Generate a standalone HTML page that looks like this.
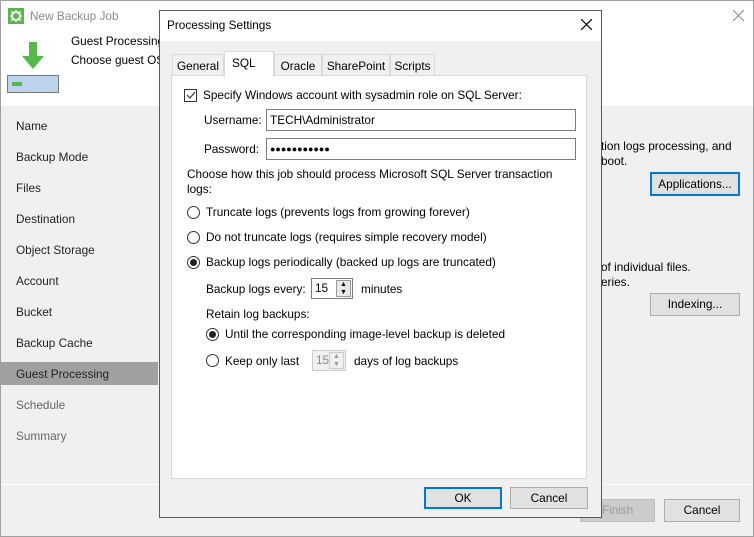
<!DOCTYPE html>
<html><head><style>
*{margin:0;padding:0;box-sizing:border-box}
body{width:754px;height:537px;position:relative;overflow:hidden;font-family:"Liberation Sans",sans-serif;font-size:11.8px;color:#000;background:#f0f0f0}
.a{position:absolute;white-space:nowrap}
.btn{position:absolute;background:#e1e1e1;border:1px solid #adadad;text-align:center;line-height:20px}
.rad{position:absolute;width:13px;height:13px;border:1px solid #333;border-radius:50%;background:#fff}
.rad.on::after{content:"";position:absolute;left:2px;top:2px;width:7px;height:7px;border-radius:50%;background:#222}
.inp{position:absolute;background:#fff;border:1px solid #7a7a7a;padding-left:3px;line-height:20px}
.nav{position:absolute;left:16px;color:#222}
</style></head><body>
<div class="a" style="left:0;top:0;width:754px;height:537px;border:1px solid #a0a0a0"></div>
<div class="a" style="left:1px;top:1px;width:752px;height:105px;background:#fff"></div>
<svg class="a" style="left:8px;top:8px" width="16" height="16"><rect width="16" height="16" fill="#54b948"/><circle cx="8" cy="8" r="4" fill="none" stroke="#fff" stroke-width="2"/><path d="M8 2v3M8 11v3M2 8h3M11 8h3M3.5 3.5l2 2M10.5 10.5l2 2M3.5 12.5l2-2M10.5 5.5l2-2" stroke="#fff" stroke-width="1.6"/></svg>
<div class="a" style="left:30px;top:9px;color:#8a8a8a">New Backup Job</div>
<svg class="a" style="left:18px;top:42px" width="30" height="32"><path d="M11 0h8v14h7l-11 13-11-13h7z" fill="#54b948"/></svg>
<div class="a" style="left:7px;top:75px;width:52px;height:18px;background:#bcd4ec;border:1px solid #777"></div>
<div class="a" style="left:12px;top:82px;width:10px;height:4px;background:#54b948"></div>
<div class="a" style="left:71px;top:34px">Guest Processing</div>
<div class="a" style="left:71px;top:53px">Choose guest OS</div>
<svg class="a" style="left:733px;top:10px" width="11" height="11"><path d="M0 0L11 11M11 0L0 11" stroke="#888"/></svg>
<div class="nav" style="top:119px">Name</div>
<div class="nav" style="top:150px">Backup Mode</div>
<div class="nav" style="top:181px">Files</div>
<div class="nav" style="top:212px">Destination</div>
<div class="nav" style="top:243px">Object Storage</div>
<div class="nav" style="top:274px">Account</div>
<div class="nav" style="top:305px">Bucket</div>
<div class="nav" style="top:336px">Backup Cache</div>
<div class="a" style="left:1px;top:362px;width:157px;height:23px;background:#a0a0a0"></div>
<div class="nav" style="top:367px">Guest Processing</div>
<div class="nav" style="top:398px;color:#666">Schedule</div>
<div class="nav" style="top:429px;color:#666">Summary</div>
<div class="a" style="left:1px;top:484px;width:752px;height:1px;background:#fff"></div>
<div class="a" style="left:601px;top:139px">tion logs processing, and</div>
<div class="a" style="left:601px;top:154px">boot.</div>
<div class="btn" style="left:650px;top:172px;width:90px;height:24px;border:2px solid #0078d7">Applications...</div>
<div class="a" style="left:601px;top:260px">of individual files.</div>
<div class="a" style="left:601px;top:275px">eries.</div>
<div class="btn" style="left:650px;top:293px;width:90px;height:23px">Indexing...</div>
<div class="btn" style="left:580px;top:499px;width:75px;height:23px;background:#ccc;border-color:#bfbfbf;color:#999">Finish</div>
<div class="btn" style="left:664px;top:499px;width:76px;height:23px">Cancel</div>
<!-- dialog -->
<div class="a" style="left:159px;top:10px;width:443px;height:508px;background:#f0f0f0;border:1px solid #5a5a5a"></div>
<div class="a" style="left:160px;top:11px;width:441px;height:30px;background:#fff"></div>
<div class="a" style="left:167px;top:18px">Processing Settings</div>
<svg class="a" style="left:581px;top:19px" width="11" height="11"><path d="M0 0L11 11M11 0L0 11" stroke="#000" stroke-width="1.2"/></svg>
<div class="a" style="left:171px;top:75px;width:416px;height:404px;background:#fff;border:1px solid #d9d9d9"></div>
<div class="a" style="left:172px;top:54px;width:52px;height:22px;background:#f0f0f0;border:1px solid #d9d9d9;text-align:center;line-height:22px">General</div>
<div class="a" style="left:274px;top:54px;width:48px;height:22px;background:#f0f0f0;border:1px solid #d9d9d9;text-align:center;line-height:22px">Oracle</div>
<div class="a" style="left:322px;top:54px;width:68px;height:22px;background:#f0f0f0;border:1px solid #d9d9d9;text-align:center;line-height:22px">SharePoint</div>
<div class="a" style="left:390px;top:54px;width:45px;height:22px;background:#f0f0f0;border:1px solid #d9d9d9;text-align:center;line-height:22px">Scripts</div>
<div class="a" style="left:224px;top:51px;width:50px;height:26px;background:#fff;border:1px solid #d9d9d9;border-bottom:none;padding-left:7px;line-height:22px">SQL</div>
<div class="a" style="left:184px;top:89px;width:13px;height:13px;border:1px solid #333;background:#fff"></div>
<svg class="a" style="left:186px;top:91px" width="10" height="9"><path d="M1 4l3 3 5-6" stroke="#333" fill="none" stroke-width="1.2"/></svg>
<div class="a" style="left:203px;top:88px">Specify Windows account with sysadmin role on SQL Server:</div>
<div class="a" style="left:204px;top:113px">Username:</div>
<div class="inp" style="left:266px;top:109px;width:310px;height:22px">TECH\Administrator</div>
<div class="a" style="left:204px;top:142px">Password:</div>
<div class="inp" style="left:266px;top:138px;width:310px;height:22px;font-size:9px;letter-spacing:0px">●●●●●●●●●●●</div>
<div class="a" style="left:187px;top:167px">Choose how this job should process Microsoft SQL Server transaction</div>
<div class="a" style="left:187px;top:182px">logs:</div>
<div class="rad" style="left:187px;top:206px"></div><div class="a" style="left:206px;top:205px">Truncate logs (prevents logs from growing forever)</div>
<div class="rad" style="left:187px;top:231px"></div><div class="a" style="left:206px;top:230px">Do not truncate logs (requires simple recovery model)</div>
<div class="rad on" style="left:187px;top:256px"></div><div class="a" style="left:206px;top:255px">Backup logs periodically (backed up logs are truncated)</div>
<div class="a" style="left:206px;top:282px">Backup logs every:</div>
<div class="inp" style="left:311px;top:278px;width:42px;height:21px;line-height:18px">15</div>
<div class="a" style="left:336px;top:280px;width:15px;height:17px;background:#e8e8e8;border:1px solid #999;font-size:7px;text-align:center;line-height:8px">▲<br>▼</div>
<div class="a" style="left:361px;top:282px">minutes</div>
<div class="a" style="left:206px;top:307px">Retain log backups:</div>
<div class="rad on" style="left:206px;top:328px"></div><div class="a" style="left:225px;top:327px">Until the corresponding image-level backup is deleted</div>
<div class="rad" style="left:206px;top:354px"></div><div class="a" style="left:225px;top:354px">Keep only last</div>
<div class="inp" style="left:312px;top:350px;width:34px;height:21px;line-height:18px;background:#f0f0f0;border-color:#ccc;color:#888">15</div>
<div class="a" style="left:329px;top:352px;width:15px;height:17px;background:#f0f0f0;border:1px solid #ccc;font-size:7px;color:#999;text-align:center;line-height:8px">▲<br>▼</div>
<div class="a" style="left:354px;top:354px">days of log backups</div>
<div class="btn" style="left:424px;top:487px;width:78px;height:22px;border:2px solid #0078d7;line-height:18px">OK</div>
<div class="btn" style="left:510px;top:487px;width:78px;height:22px">Cancel</div>
</body></html>
